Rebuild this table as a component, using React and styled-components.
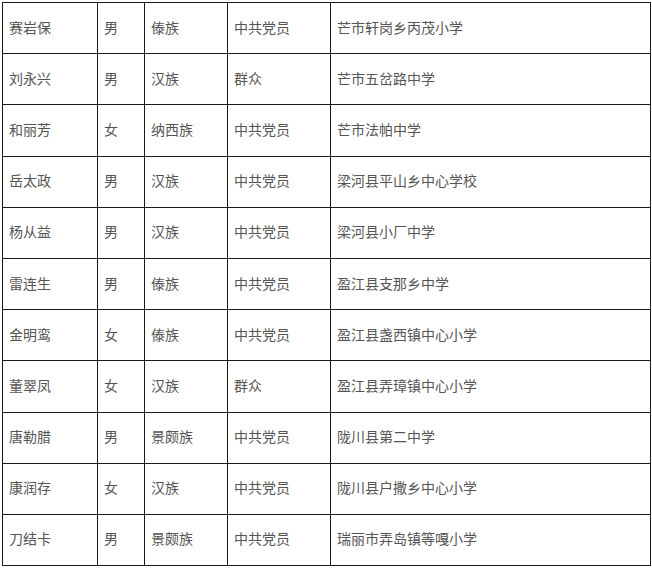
import React from "react";
import styled, { createGlobalStyle } from "styled-components";

const GlobalStyle = createGlobalStyle`
  html, body {
    margin: 0;
    padding: 0;
    background: #ffffff;
  }
  body {
    font-family: "Noto Sans CJK SC", "Noto Sans", sans-serif;
  }
`;

const Page = styled.div`
  padding: 2px 0 0 2px;
  width: 652px;
  height: 568px;
  box-sizing: border-box;
  overflow: hidden;
`;

const Table = styled.table`
  border-collapse: collapse;
  table-layout: fixed;
  width: 649px;
`;

const Row = styled.tr`
  height: 51.2px;
`;

const Cell = styled.td`
  border: 1px solid #1a1a1a;
  padding: 0 0 3px 6px;
  font-size: 14px;
  line-height: 20px;
  color: #555555;
  vertical-align: middle;
  white-space: nowrap;
`;

const cols = [95, 47, 83, 103, 320];

const rows = [
  ["赛岩保", "男", "傣族", "中共党员", "芒市轩岗乡丙茂小学"],
  ["刘永兴", "男", "汉族", "群众", "芒市五岔路中学"],
  ["和丽芳", "女", "纳西族", "中共党员", "芒市法帕中学"],
  ["岳太政", "男", "汉族", "中共党员", "梁河县平山乡中心学校"],
  ["杨从益", "男", "汉族", "中共党员", "梁河县小厂中学"],
  ["雷连生", "男", "傣族", "中共党员", "盈江县支那乡中学"],
  ["金明鸾", "女", "傣族", "中共党员", "盈江县盏西镇中心小学"],
  ["董翠凤", "女", "汉族", "群众", "盈江县弄璋镇中心小学"],
  ["唐勒腊", "男", "景颇族", "中共党员", "陇川县第二中学"],
  ["康润存", "女", "汉族", "中共党员", "陇川县户撒乡中心小学"],
  ["刀结卡", "男", "景颇族", "中共党员", "瑞丽市弄岛镇等嘎小学"],
];

export default function App() {
  return (
    <>
      <GlobalStyle />
      <Page>
        <Table>
          <colgroup>
            {cols.map((w, i) => (
              <col key={i} style={{ width: w }} />
            ))}
          </colgroup>
          <tbody>
            {rows.map((r, i) => (
              <Row key={i}>
                {r.map((c, j) => (
                  <Cell key={j}>{c}</Cell>
                ))}
              </Row>
            ))}
          </tbody>
        </Table>
      </Page>
    </>
  );
}
